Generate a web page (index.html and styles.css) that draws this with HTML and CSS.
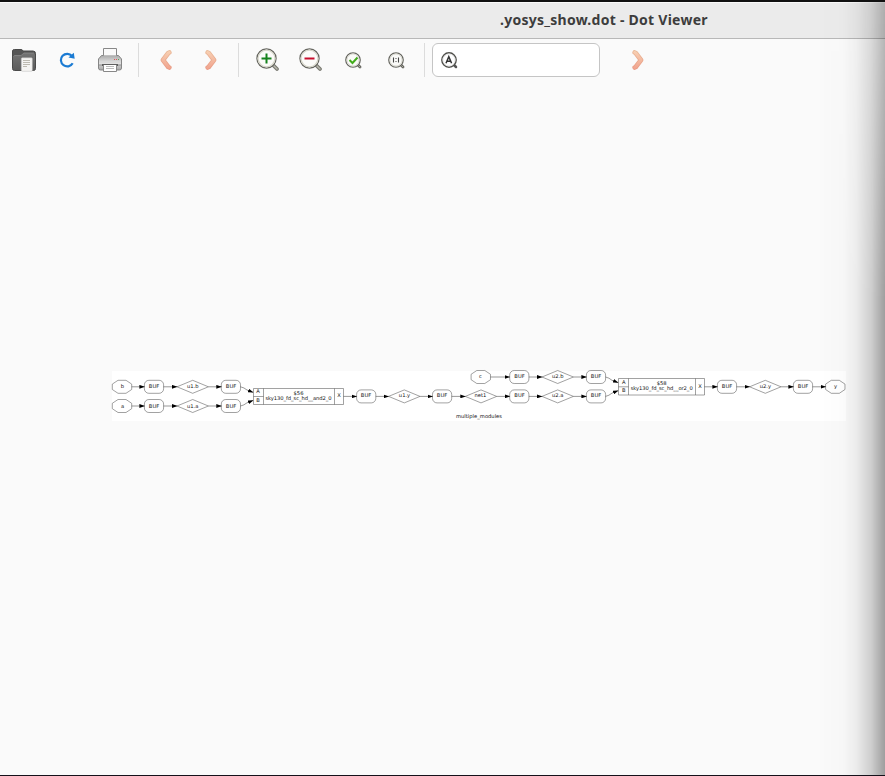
FILE: index.html
```html
<!DOCTYPE html>
<html lang="en">
<head>
<meta charset="utf-8">
<title>.yosys_show.dot - Dot Viewer</title>
<link rel="stylesheet" href="styles.css">
</head>
<body>
<div class="window">
  <header class="titlebar"><h1 class="title">.yosys_show.dot - Dot Viewer</h1></header>
  <nav class="toolbar">
    <button class="tool" aria-label="Open">
      <svg width="24" height="24" viewBox="0 0 24 24">
        <defs><linearGradient id="folder" x1="0" y1="0" x2="0" y2="1"><stop offset="0" stop-color="#747474"/><stop offset="1" stop-color="#5b5b5b"/></linearGradient></defs>
        <path d="M.5 4V3Q.5 1.500 2.500 1.500H9Q10.500 1.500 11 3H21Q23.500 3 23.500 5.500V20.500Q23.500 22.500 21.500 22.500H2.500Q.5 22.500.5 20.500Z" fill="#555" stroke="#4a4a4a"/>
        <path d="M1 9Q1 7.500 3 7.500H9L12 5H21Q23 5 23 7V20Q23 22 21 22H3Q1 22 1 20Z" fill="url(#folder)"/>
        <path d="M1.500 8.500Q2 7.500 3 7.500H9L12 5H22" fill="none" stroke="#8c8c8c" stroke-width=".7"/>
        <rect x="9.300" y="9.800" width="11" height="13.500" rx="1" fill="#f5f4f2" stroke="#bbb" stroke-width=".5"/>
        <path d="M11 12.500h7M11 14.500h7M11 16.500h7M11 18.500h4" stroke="#b7b3a9" stroke-width=".9"/>
      </svg>
    </button>
    <button class="tool" aria-label="Reload">
      <svg width="16" height="16" viewBox="0 0 16 16">
        <path d="M13 4A6.300 6.300 0 1 0 13.700 11.300" fill="none" stroke="#1b7bd3" stroke-width="2.200"/>
        <path d="M14.800.8 15.700 6.800 9.500 5.600Z" fill="#1b7bd3"/>
      </svg>
    </button>
    <button class="tool" aria-label="Print">
      <svg width="24" height="24" viewBox="0 0 24 24">
        <defs><linearGradient id="printer" x1="0" y1="0" x2="0" y2="1"><stop offset="0" stop-color="#aaa"/><stop offset=".45" stop-color="#ddd"/><stop offset="1" stop-color="#aaa"/></linearGradient></defs>
        <path d="M3.500 7.500H20.500L23.500 11V20Q23.500 22 21.500 22H2.500Q.5 22 .5 20V11Z" fill="url(#printer)" stroke="#858585"/>
        <path d="M5.500 7.500V.5H18.500V7.500" fill="#fafafa" stroke="#888"/>
        <path d="M1 16H23" stroke="#efefef"/><path d="M1 17H23" stroke="#8f8f8f"/>
        <path d="M4 17H20" stroke="#4a4a4a" stroke-width="1.600"/>
        <path d="M5.500 17V23.500H18.500V17" fill="#fff" stroke="#888"/>
        <path d="M8 18.500h8M8 20.500h8" stroke="#bbb"/>
        <path d="M16 11.500h1M18 11.500h1" stroke="#e05555"/><path d="M20 11.500h1" stroke="#55a555"/>
      </svg>
    </button>
    <span class="separator"></span>
    <button class="tool" aria-label="Back"><svg width="12" height="20" viewBox="0 0 12 20"><use href="#chevron" transform="matrix(-1 0 0 1 12 0)"/></svg></button>
    <button class="tool forward" aria-label="Forward">
      <svg width="12" height="20" viewBox="0 0 12 20">
        <defs>
          <linearGradient id="peach" x1="0" y1="0" x2="0" y2="20" gradientUnits="userSpaceOnUse"><stop offset="0" stop-color="#f8d3b5"/><stop offset="1" stop-color="#f0a18c"/></linearGradient>
          <linearGradient id="peach-edge" x1="0" y1="0" x2="0" y2="20" gradientUnits="userSpaceOnUse"><stop offset="0" stop-color="#e9bb9a"/><stop offset="1" stop-color="#e99882"/></linearGradient>
          <g id="chevron" fill="none" stroke-linecap="round" stroke-linejoin="round"><path d="M2.700 2.500 3.700 3 9 10 3.700 17 2.700 17.500" stroke="url(#peach-edge)" stroke-width="4.700"/><path d="M2.700 2.500 3.700 3 9 10 3.700 17 2.700 17.500" stroke="url(#peach)" stroke-width="3"/></g>
        </defs>
        <use href="#chevron"/>
      </svg>
    </button>
    <span class="separator second"></span>
    <button class="tool" aria-label="Zoom in">
      <svg width="24" height="24" viewBox="0 0 24 24">
        <defs><g id="lens"><path d="M17 17 21 21" stroke="#77776f" stroke-width="3.800" stroke-linecap="round"/><path d="M17 17 21 21" stroke="#b9b9ae" stroke-width="1.500" stroke-linecap="round"/><circle cx="10.500" cy="10.500" r="9.600" fill="#fbfbf9" stroke="#65655f" stroke-width="1.200"/><circle cx="10.500" cy="10.500" r="8.400" fill="none" stroke="#d6d6c9" stroke-width="1.200"/></g></defs>
        <use href="#lens"/><path d="M5.500 10.500h10M10.500 5.500v10" stroke="#15821c" stroke-width="2"/>
      </svg>
    </button>
    <button class="tool" aria-label="Zoom out"><svg width="24" height="24" viewBox="0 0 24 24"><use href="#lens"/><path d="M5.500 10.500h10" stroke="#c80f2d" stroke-width="2"/></svg></button>
    <button class="tool" aria-label="Zoom to fit">
      <svg width="17" height="17" viewBox="0 0 17 17">
        <defs><g id="lens-small"><path d="M12.500 12.500 15 15" stroke="#66665f" stroke-width="2.800" stroke-linecap="round"/><path d="M13 13 15 15" stroke="#b3b3aa" stroke-width=".9" stroke-linecap="round"/><circle cx="8" cy="8" r="7.200" fill="#fafaf8" stroke="#65655f" stroke-width="1.300"/><circle cx="8" cy="8" r="6.100" fill="none" stroke="#d8d8cf"/></g></defs>
        <use href="#lens-small"/><path d="M4.500 8 7.500 11 12.500 5.500" fill="none" stroke="#42ac1c" stroke-width="2"/>
      </svg>
    </button>
    <button class="tool" aria-label="Zoom 1:1"><svg width="17" height="17" viewBox="0 0 17 17"><use href="#lens-small"/><path d="M5.500 5.500v5M10.500 5.500v5" stroke="#444" stroke-width="1.100"/><path d="M7.500 6.500h1M7.500 9.500h1" stroke="#444"/></svg></button>
    <span class="separator third"></span>
    <div class="search">
      <svg width="17" height="17" viewBox="0 0 17 17"><path d="M12.500 12.500 15 15" stroke="#555" stroke-width="2.500" stroke-linecap="round"/><circle cx="8" cy="8" r="7.200" fill="#fff" stroke="#51514d" stroke-width="1.400"/><circle cx="8" cy="8" r="6" fill="none" stroke="#ddd" stroke-width=".7"/><path d="M5 11.200 7.800 4.700 10.600 11.200M6 9.200H9.600" fill="none" stroke="#333" stroke-width="1.500"/></svg>
    </div>
    <button class="tool next" aria-label="Find next"><svg width="12" height="20" viewBox="0 0 12 20"><use href="#chevron"/></svg></button>
  </nav>
  <main class="canvas">
    <svg class="graph" width="734" height="50" viewBox="112 371 734 50">
      <defs>
        <path id="port" d="M-4-6.500H4L9.700-2.700V2.700L4 6.500H-4L-9.700 2.700V-2.700Z"/>
        <rect id="buf" x="-9.600" y="-6.500" width="19.200" height="13" rx="4.500"/>
        <path id="net" d="M-15.700 0 0-6.500 15.700 0 0 6.500Z"/>
        <marker id="arrow" markerWidth="6" markerHeight="4" refX="5" refY="2" orient="auto" markerUnits="userSpaceOnUse"><path d="M0 .1 5.500 2 0 3.900Z" fill="#000"/></marker>
      </defs>
      <g class="shapes">
        <use href="#port" x="122" y="386.800"/><use href="#port" x="122" y="406"/><use href="#port" x="480.800" y="377"/><use href="#port" x="835.300" y="386.800"/>
        <use href="#buf" x="154" y="386.800"/><use href="#buf" x="154" y="406"/><use href="#buf" x="230.900" y="386.800"/><use href="#buf" x="230.900" y="406"/>
        <use href="#buf" x="366.200" y="396.400"/><use href="#buf" x="442.100" y="396.400"/><use href="#buf" x="519.300" y="377"/><use href="#buf" x="519.300" y="396.400"/>
        <use href="#buf" x="596" y="377"/><use href="#buf" x="596" y="396.400"/><use href="#buf" x="727" y="386.800"/><use href="#buf" x="803" y="386.800"/>
        <use href="#net" x="192.700" y="386.800"/><use href="#net" x="192.700" y="406"/><use href="#net" x="404.300" y="396.400"/><use href="#net" x="481" y="396.400"/>
        <use href="#net" x="557.700" y="377"/><use href="#net" x="557.700" y="396.400"/><use href="#net" x="765.300" y="386.800"/>
        <path d="M253.500 388.500H343.500V404.500H253.500ZM263.500 388.500V404.500M334.500 388.500V404.500M253.500 396.500H263.500"/>
        <path d="M618.500 378.500H704.500V395H618.500ZM628.500 378.500V395M695.500 378.500V395M618.500 386.800H628.500"/>
      </g>
      <g class="edges">
        <path d="M131.700 386.800H144.400"/><path d="M131.700 406H144.400"/><path d="M163.600 386.800H177"/><path d="M163.600 406H177"/><path d="M208.400 386.800H221.300"/><path d="M208.400 406H221.300"/>
        <path d="M240.500 386.800Q244 387.500 247 390L253 392.300"/><path d="M240.500 406Q244 405.300 247 402.800L253 400.500"/>
        <path d="M343.500 396.400H356.600"/><path d="M375.800 396.400H388.600"/><path d="M420 396.400H432.500"/><path d="M451.700 396.400H465.300"/>
        <path d="M490.500 377H509.700"/><path d="M496.700 396.400H509.700"/><path d="M528.900 377H542"/><path d="M528.900 396.400H542"/><path d="M573.400 377H586.400"/><path d="M573.400 396.400H586.400"/>
        <path d="M605.600 377Q609 377.700 612 380.300L618 382.600"/><path d="M605.600 396.400Q609 395.700 612 393.100L618 390.800"/>
        <path d="M704.500 386.800H717.400"/><path d="M736.600 386.800H749.600"/><path d="M781 386.800H793.400"/><path d="M812.600 386.800H825.600"/>
      </g>
      <g class="labels">
        <text x="122.500" y="388.300">b</text><text x="122.500" y="407.600">a</text><text x="480.500" y="378.400">c</text><text x="835.500" y="388.300">y</text>
        <text x="154" y="388.300">BUF</text><text x="154" y="407.600">BUF</text><text x="231" y="388.300">BUF</text><text x="231" y="407.600">BUF</text>
        <text x="366" y="397.300">BUF</text><text x="442" y="397.300">BUF</text><text x="519.500" y="378.400">BUF</text><text x="519.500" y="397.400">BUF</text>
        <text x="596" y="378.400">BUF</text><text x="596" y="397.400">BUF</text><text x="727" y="388.300">BUF</text><text x="803" y="388.300">BUF</text>
        <text x="192.700" y="388.300">u1.b</text><text x="192.700" y="407.600">u1.a</text><text x="404.500" y="397.300">u1.y</text><text x="480.500" y="397.300">net1</text>
        <text x="557.700" y="378.400">u2.b</text><text x="557.700" y="397.300">u2.a</text><text x="765.300" y="388.300">u2.y</text>
        <text x="258" y="393.300">A</text><text x="258" y="402">B</text><text x="339" y="397.300">X</text><text x="298.500" y="395">$56</text><text x="298.500" y="400" textLength="66">sky130_fd_sc_hd__and2_0</text>
        <text x="623.700" y="384.300">A</text><text x="623.700" y="392.300">B</text><text x="700" y="388.300">X</text><text x="661.700" y="385">$58</text><text x="661.700" y="390" textLength="62">sky130_fd_sc_hd__or2_0</text>
        <text x="479" y="418" textLength="46">multiple_modules</text>
      </g>
    </svg>
  </main>
  <div class="edge-shadow"></div>
</div>
</body>
</html>
```
FILE: styles.css
```css
* { box-sizing: border-box; }
body { margin: 0; background: #fafafa; font-family: "Noto Sans", sans-serif; }
.window {
  position: relative;
  display: flex;
  flex-direction: column;
  width: 885px;
  height: 776px;
  overflow: hidden;
  border-top: 2px solid #111;
  border-bottom: 1px solid #15111a;
}
.titlebar {
  flex: 0 0 37px;
  display: flex;
  align-items: center;
  padding: 0 0 2px 500px;
  border-top: 1px solid #fafafa;
  border-bottom: 1px solid #b8b8b8;
  background: #ebebeb;
}
.title { margin: 0; color: #3d3d3d; font-size: 14px; line-height: 20px; font-weight: 700; letter-spacing: .26px; white-space: nowrap; }
.toolbar { flex: 0 0 42px; display: flex; align-items: center; padding-left: 2px; }
.tool {
  flex: 0 0 43px;
  display: flex;
  align-items: center;
  justify-content: center;
  height: 34px;
  padding: 0;
  border: 0;
  background: none;
}
.tool svg { display: block; }
.separator { width: 1px; height: 34px; margin: 0 5px 0 7px; background: #dcdcdc; }
.forward { margin-left: 2px; }
.second { margin: 0 7px 0 6px; }
.third { margin-left: 6px; }
.search {
  display: flex;
  align-items: center;
  width: 168px;
  height: 34px;
  margin-left: 2px;
  padding-left: 8px;
  border: 1px solid #c5c5c5;
  border-radius: 6px;
  background: #fff;
}
.next { margin-left: 16px; }
.canvas { flex: 1; padding: 290px 0 0 112px; }
.graph { display: block; overflow: visible; background: #fff; }
.shapes { fill: #fff; stroke: #555; stroke-width: .55; }
.edges { fill: none; stroke: #333; stroke-width: .5; }
.edges path { marker-end: url(#arrow); }
.labels { font: 5.2px "DejaVu Sans", sans-serif; fill: #111; text-anchor: middle; }
.edge-shadow {
  position: absolute;
  top: 0;
  right: 0;
  bottom: 0;
  width: 65px;
  background: linear-gradient(90deg, rgba(0,0,0,0), rgba(0,0,0,.01) 35%, rgba(0,0,0,.055) 55%, rgba(0,0,0,.17) 78%, rgba(0,0,0,.37));
  mask-image: linear-gradient(rgba(0,0,0,.7), #000 300px);
  pointer-events: none;
}
```
